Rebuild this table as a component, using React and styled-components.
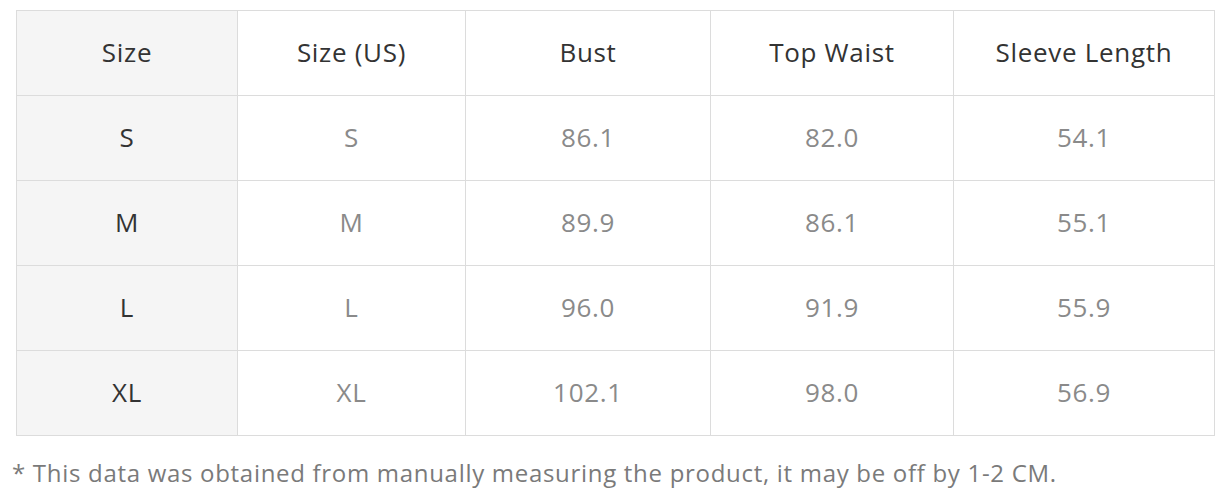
import React from "react";
import styled, { createGlobalStyle } from "styled-components";

const GlobalStyle = createGlobalStyle`
  body {
    margin: 0;
    background: #ffffff;
    font-family: "Open Sans", Roboto, "Liberation Sans", sans-serif;
  }
`;

const Wrapper = styled.div`
  padding: 10px 0 0 16px;
  width: 1224px;
  box-sizing: border-box;
`;

const Table = styled.table`
  border-collapse: collapse;
  width: 1198px;
  table-layout: fixed;
`;

const Cell = styled.td`
  height: 85px;
  border: 1px solid #dcdcdc;
  text-align: center;
  vertical-align: middle;
  font-size: 26px;
  line-height: 30px;
  letter-spacing: 0.7px;
  padding: 0 0 2px 0;
  box-sizing: border-box;
  color: ${props => (props.head || props.first ? "#333333" : "#8a8a8a")};
  background: ${props => (props.first ? "#f5f5f5" : "#ffffff")};
`;

const Note = styled.p`
  margin: 22px 0 0 -4px;
  font-size: 24px;
  line-height: 30px;
  letter-spacing: 0.7px;
  color: #7a7a7a;
`;

const COLS = [221, 228, 245, 243, 261];

const HEAD = ["Size", "Size (US)", "Bust", "Top Waist", "Sleeve Length"];

const ROWS = [
  ["S", "S", "86.1", "82.0", "54.1"],
  ["M", "M", "89.9", "86.1", "55.1"],
  ["L", "L", "96.0", "91.9", "55.9"],
  ["XL", "XL", "102.1", "98.0", "56.9"]
];

const App = () => (
  <Wrapper>
    <GlobalStyle />
    <Table>
      <colgroup>
        {COLS.map((w, i) => (
          <col key={i} style={{ width: w }} />
        ))}
      </colgroup>
      <tbody>
        <tr>
          {HEAD.map((h, i) => (
            <Cell key={h} head first={i === 0}>
              {h}
            </Cell>
          ))}
        </tr>
        {ROWS.map(row => (
          <tr key={row[0]}>
            {row.map((v, i) => (
              <Cell key={i} first={i === 0}>
                {v}
              </Cell>
            ))}
          </tr>
        ))}
      </tbody>
    </Table>
    <Note>
      * This data was obtained from manually measuring the product, it may be
      off by 1-2 CM.
    </Note>
  </Wrapper>
);

export default App;
